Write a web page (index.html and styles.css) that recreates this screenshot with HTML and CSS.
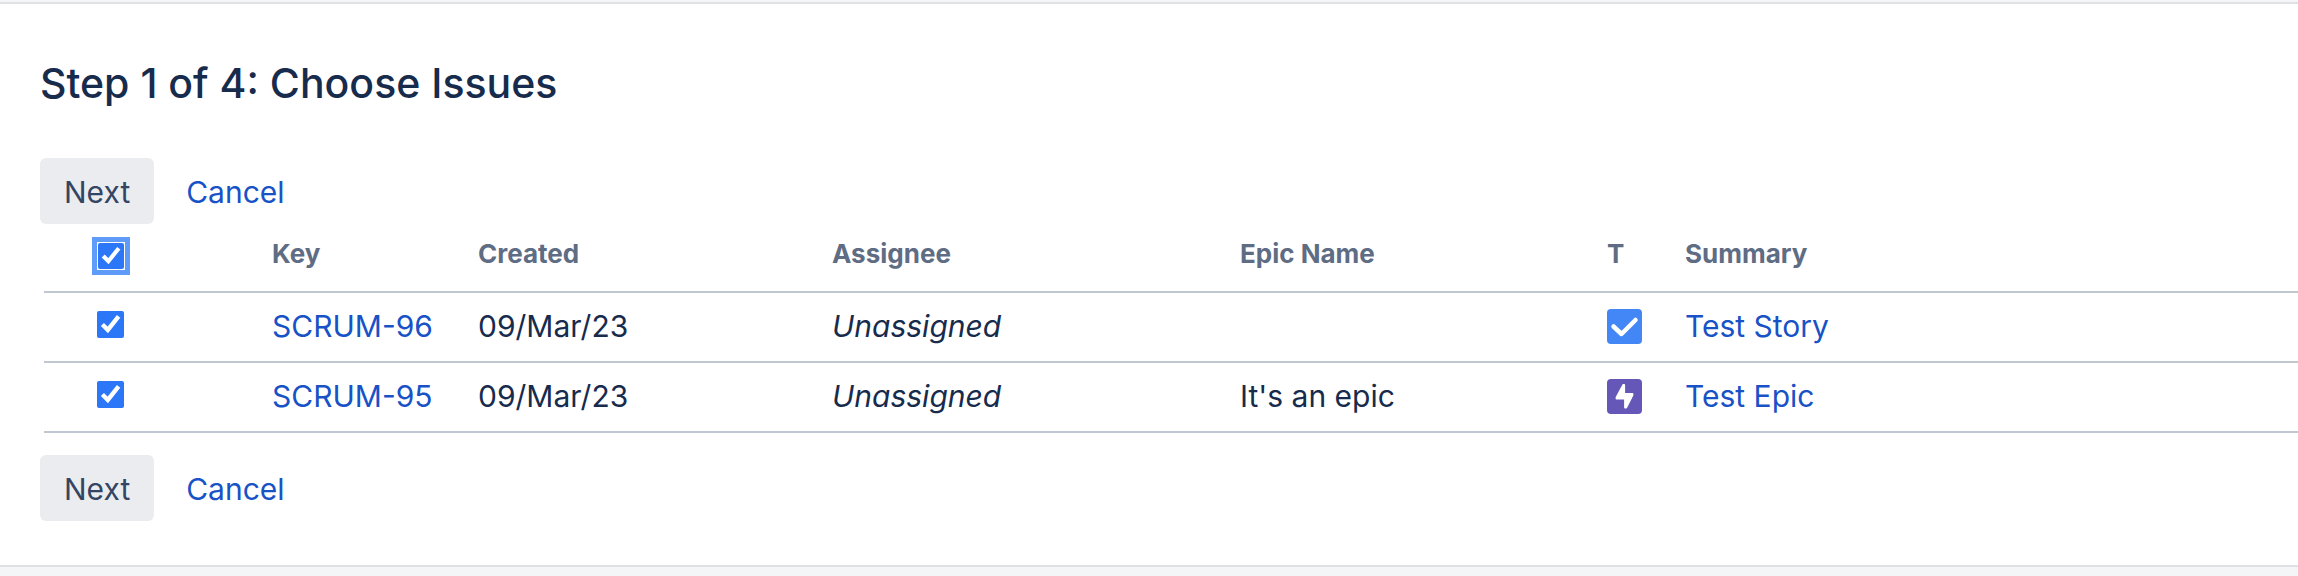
FILE: index.html
```
<!DOCTYPE html>
<html lang="en">
<head>
<meta charset="utf-8">
<title>Step 1 of 4: Choose Issues</title>
<link rel="stylesheet" href="styles.css">
</head>
<body>
<main class="panel">
  <h1 class="title">Step 1 of 4: Choose Issues</h1>
  <form class="bulk-form">
    <div class="actions">
      <button class="button" type="submit">Next</button>
      <a class="link" href="#cancel">Cancel</a>
    </div>
    <table class="issues">
      <colgroup>
        <col class="col-select"><col class="col-key"><col class="col-created"><col class="col-assignee"><col class="col-epic"><col class="col-type"><col>
      </colgroup>
      <thead>
        <tr>
          <th class="select"><input class="check check-focused" type="checkbox" aria-label="Select all issues" checked></th>
          <th>Key</th>
          <th>Created</th>
          <th>Assignee</th>
          <th>Epic Name</th>
          <th>T</th>
          <th>Summary</th>
        </tr>
      </thead>
      <tbody>
        <tr>
          <td class="select"><input class="check" type="checkbox" aria-label="Select SCRUM-96" checked></td>
          <td><a class="link" href="#SCRUM-96">SCRUM-96</a></td>
          <td>09/Mar/23</td>
          <td><em>Unassigned</em></td>
          <td></td>
          <td>
            <svg class="type-icon" viewBox="0 0 35 35" role="img" aria-label="Task">
              <rect width="35" height="35" rx="4" fill="#4287f5"/>
              <path d="M6.500 17.500L14.500 25L28.500 11" fill="none" stroke="#fff" stroke-width="4.500" stroke-linecap="round" stroke-linejoin="round"/>
            </svg>
          </td>
          <td><a class="link" href="#SCRUM-96">Test Story</a></td>
        </tr>
        <tr>
          <td class="select"><input class="check" type="checkbox" aria-label="Select SCRUM-95" checked></td>
          <td><a class="link" href="#SCRUM-95">SCRUM-95</a></td>
          <td>09/Mar/23</td>
          <td><em>Unassigned</em></td>
          <td>It's an epic</td>
          <td>
            <svg class="type-icon" viewBox="0 0 35 35" role="img" aria-label="Epic">
              <rect width="35" height="35" rx="4" fill="#6457b8"/>
              <path d="M16.200 6L9.500 18.500V19.500H18V28.500H19.200L25.500 16V15H17.200V6Z" fill="#fff" stroke="#fff" stroke-width="1.800" stroke-linejoin="round"/>
            </svg>
          </td>
          <td><a class="link" href="#SCRUM-95">Test Epic</a></td>
        </tr>
      </tbody>
    </table>
    <div class="actions actions-bottom">
      <button class="button" type="submit">Next</button>
      <a class="link" href="#cancel">Cancel</a>
    </div>
  </form>
</main>
</body>
</html>
```
FILE: styles.css
```
* {
  box-sizing: border-box;
}

body {
  margin: 0;
  padding-top: 2px;
  background: #f4f5f7;
  color: #172b4d;
  font-family: Inter, "Liberation Sans", sans-serif;
  font-size: 30px;
  line-height: 40px;
}

.panel {
  padding: 51px 0 44px 40px;
  background: #fff;
  border-top: 2px solid #dfe1e5;
  border-bottom: 2px solid #dfe1e5;
}

.title {
  margin: 0 0 47px;
  font-size: 41px;
  font-weight: 500;
  line-height: 56px;
}

.actions {
  display: flex;
  align-items: center;
  gap: 32px;
}

.actions .link {
  padding-top: 2px;
}

.actions-bottom {
  margin-top: 22px;
}

.button {
  height: 66px;
  padding: 2px 24px 0;
  border: 0;
  border-radius: 6px;
  background: #ebecf0;
  color: #344563;
  font: inherit;
}

.link {
  color: #1852c7;
  text-decoration: none;
}

.issues {
  width: calc(100% - 4px);
  margin-left: 4px;
  table-layout: fixed;
  border-collapse: separate;
  border-spacing: 0;
}

.col-select { width: 214px; }
.col-key { width: 206px; }
.col-created { width: 354px; }
.col-assignee { width: 408px; }
.col-epic { width: 367px; }
.col-type { width: 78px; }

th,
td {
  height: 70px;
  padding: 0 14px 2px;
  border-bottom: 2px solid #c1c7d0;
  text-align: left;
  vertical-align: middle;
  white-space: nowrap;
}

th {
  height: 69px;
  padding-bottom: 8px;
  color: #5e6c84;
  font-size: 26px;
  font-weight: 700;
}

.select {
  padding-left: 53px;
}

th.select {
  padding-bottom: 4px;
  padding-left: 54px;
}

.check {
  display: block;
  width: 27px;
  height: 27px;
  margin: 0;
  accent-color: #2b77f8;
}

td .check {
  margin-bottom: 4px;
}

.check-focused {
  width: 26px;
  height: 26px;
  outline: 5px solid #5f9bf8;
  outline-offset: 1px;
}

.type-icon {
  display: block;
  width: 35px;
  height: 35px;
}
```
